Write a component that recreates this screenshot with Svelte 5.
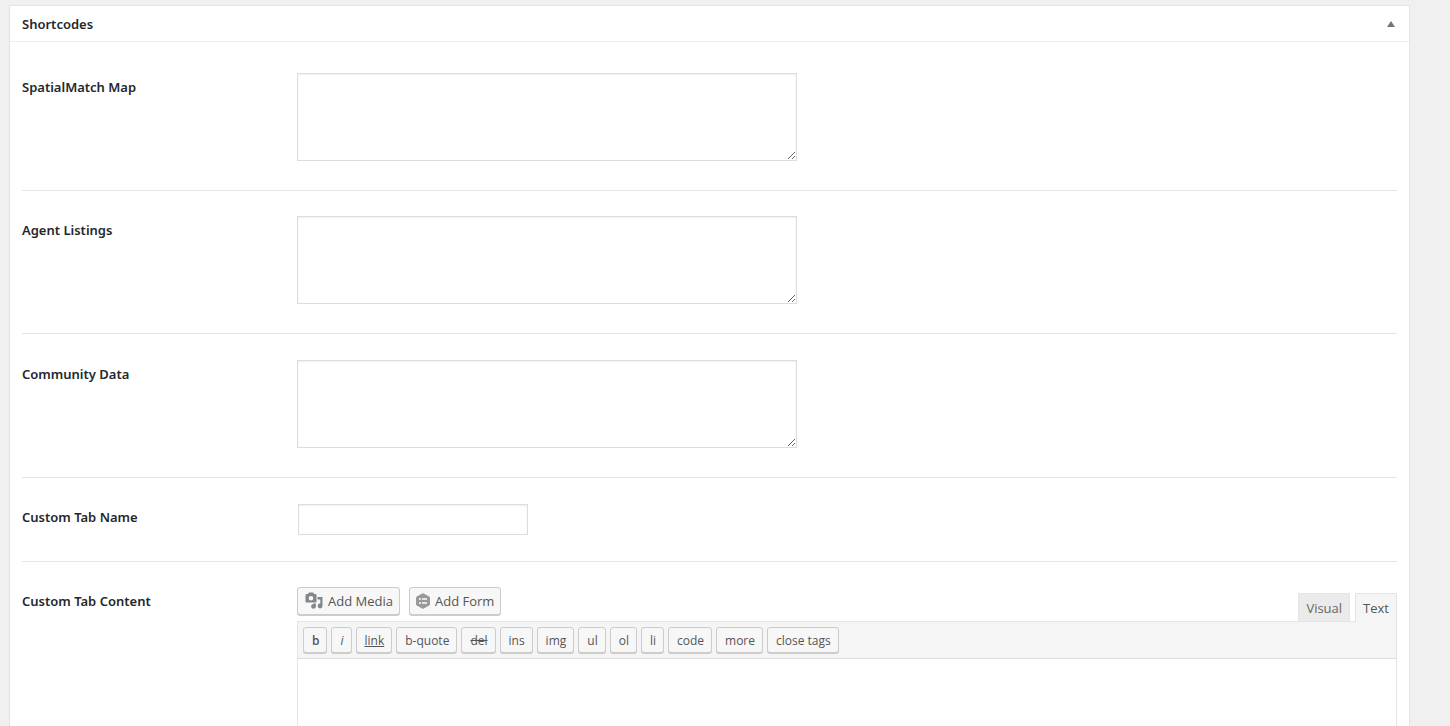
<script>
  const areas = [
    { id: 'spatialmatch-map', label: 'SpatialMatch Map' },
    { id: 'agent-listings', label: 'Agent Listings' },
    { id: 'community-data', label: 'Community Data' }
  ];
  const tags = ['b', 'i', 'link', 'b-quote', 'del', 'ins', 'img', 'ul', 'ol', 'li', 'code', 'more', 'close tags'];
  let values = $state(['', '', '']);
  let tabName = $state('');
  let content = $state('');
  let mode = $state('Text');
  let open = $state(true);
</script>

<section class="panel">
  <header>
    <h2>Shortcodes</h2>
    <button class="toggle" type="button" aria-label="Toggle panel" aria-expanded={open} onclick={() => (open = !open)}>
      <svg width="8" height="6" viewBox="0 0 8 6"><path d="M4 0 8 6H0z" fill="#72777c" /></svg>
    </button>
  </header>

  {#if open}
    <div class="fields">
      {#each areas as area, n}
        <div class="row">
          <label for={area.id}>{area.label}</label>
          <textarea id={area.id} bind:value={values[n]}></textarea>
        </div>
      {/each}

      <div class="row name">
        <label for="tab-name">Custom Tab Name</label>
        <input id="tab-name" type="text" bind:value={tabName} />
      </div>

      <div class="row">
        <label for="tab-content">Custom Tab Content</label>
        <div class="editor">
          <div class="tools">
            <button class="add" type="button">
              <svg width="18" height="18" viewBox="0 0 18 18" fill="#82878c">
                <path fill-rule="evenodd" d="M1.500 2H3l.8-1.600h4.400L9 2h1.500Q11.500 2 11.500 3v6.500q0 1-1 1h-9q-1 0-1-1V3Q.5 2 1.500 2zM6 3.900a2.300 2.300 0 1 0 0 4.600 2.300 2.300 0 0 0 0-4.600z" />
                <path d="M12.500 5H17.500V14A2.400 2.400 0 1 1 15.300 11.600V7.600H12.500z" />
                <path d="M8.400 11.400H10.900V14.200A2.400 2.400 0 1 1 8.400 11.900z" />
              </svg>
              Add Media
            </button>
            <button class="add form" type="button">
              <svg width="14" height="16" viewBox="0 0 14 16">
                <path d="M6.200.4Q7 0 7.800.4l5.400 3Q14 3.900 14 4.800v6.400q0 .9-.8 1.400l-5.400 3q-.8.4-1.600 0l-5.400-3Q0 12.100 0 11.200V4.800q0-.9.800-1.400z" fill="#999" />
                <path d="M3 5h2v2H3zM6 5h5v2H6zM3 9h2v2H3zM6 9h5v2H6z" fill="#e4e4e4" />
              </svg>
              Add Form
            </button>
            <div class="tabs">
              {#each ['Visual', 'Text'] as tab}
                <button type="button" class:active={mode === tab} onclick={() => (mode = tab)}>{tab}</button>
              {/each}
            </div>
          </div>
          <div class="box">
            <div class="quicktags">
              {#each tags as tag}
                <button type="button" class="tag {tag}">{tag}</button>
              {/each}
            </div>
            <textarea id="tab-content" class="content" bind:value={content}></textarea>
          </div>
        </div>
      </div>
    </div>
  {/if}
</section>

<style>
  :global(html) {
    overflow: hidden;
  }
  :global(body) {
    background: #f0f0f0;
    overflow: hidden;
  }
  .panel {
    margin: 5px 40px 20px 9px;
    background: #fff;
    border: 1px solid #e5e5e5;
    box-shadow: 0 1px 1px rgba(0, 0, 0, 0.04);
    color: #23282d;
    font-family: 'Segoe UI', 'Noto Sans', 'Open Sans', sans-serif;
    font-size: 13px;
  }
  button,
  input,
  textarea {
    box-sizing: border-box;
    margin: 0;
    font: inherit;
  }
  button {
    font-family: 'Segoe UI', 'Open Sans', sans-serif;
  }
  header {
    display: flex;
    align-items: center;
    justify-content: space-between;
    height: 35px;
    padding-left: 12px;
    border-bottom: 1px solid #eee;
  }
  h2 {
    margin: 0;
    font-size: 13px;
    font-weight: 600;
    line-height: 18px;
  }
  .toggle {
    display: flex;
    align-items: center;
    justify-content: center;
    width: 36px;
    height: 35px;
    padding: 0;
    border: 0;
    background: none;
  }
  .fields {
    padding: 5px 12px 0;
  }
  .row {
    display: grid;
    grid-template-columns: 20% 1fr;
    align-items: start;
    padding: 26px 0 29px;
    border-bottom: 1px solid #e5e5e5;
  }
  .row:nth-child(2),
  .row:last-child {
    padding-top: 25px;
  }
  .row:last-child {
    border-bottom: 0;
  }
  label {
    padding-top: 5px;
    font-weight: 600;
    line-height: 18px;
  }
  textarea,
  input {
    border: 1px solid #ddd;
    background: #fff;
    box-shadow: inset 0 1px 2px rgba(0, 0, 0, 0.07);
    color: #32373c;
  }
  textarea {
    display: block;
    width: 500px;
    max-width: 100%;
    height: 88px;
    padding: 2px 6px;
  }
  input {
    width: 230px;
    height: 31px;
    margin-left: 1px;
    padding: 3px 5px;
  }
  .row.name {
    padding: 26px 0;
  }
  .row.name label {
    padding-top: 4px;
  }
  .tools {
    display: flex;
    align-items: flex-start;
    gap: 9px;
  }
  .add {
    display: flex;
    align-items: center;
    gap: 5px;
    height: 28px;
    margin-bottom: 6px;
    padding: 0 6px 0 7px;
    border: 1px solid #ccc;
    border-radius: 3px;
    background: #f7f7f7;
    box-shadow: 0 1px 0 #ccc;
    color: #555;
    white-space: nowrap;
  }
  .add.form {
    padding: 0 6px;
  }
  .tabs {
    display: flex;
    gap: 5px;
    align-self: flex-end;
    margin-left: auto;
  }
  .tabs button {
    height: 28px;
    padding: 0 7px;
    border: 1px solid #e5e5e5;
    border-bottom: 0;
    background: #ebebeb;
    color: #666;
  }
  .tabs .active {
    position: relative;
    height: 29px;
    margin-bottom: -1px;
    background: #f5f5f5;
    color: #555;
  }
  .box {
    border: 1px solid #e5e5e5;
  }
  .quicktags {
    display: flex;
    flex-wrap: wrap;
    gap: 4px;
    padding: 5px;
    border-bottom: 1px solid #ddd;
    background: #f5f5f5;
  }
  .tag {
    height: 26px;
    padding: 2px 7px 0 8px;
    border: 1px solid #ccc;
    border-radius: 3px;
    background: #f7f7f7;
    box-shadow: 0 1px 0 #ccc;
    color: #555;
    font-size: 12px;
    line-height: 22px;
  }
  .b {
    font-weight: 600;
  }
  .i {
    font-style: italic;
  }
  .link {
    text-decoration: underline;
  }
  .del {
    text-decoration: line-through;
  }
  .content {
    width: 100%;
    height: 300px;
    padding: 10px;
    border: 0;
    box-shadow: none;
    resize: none;
  }
</style>
